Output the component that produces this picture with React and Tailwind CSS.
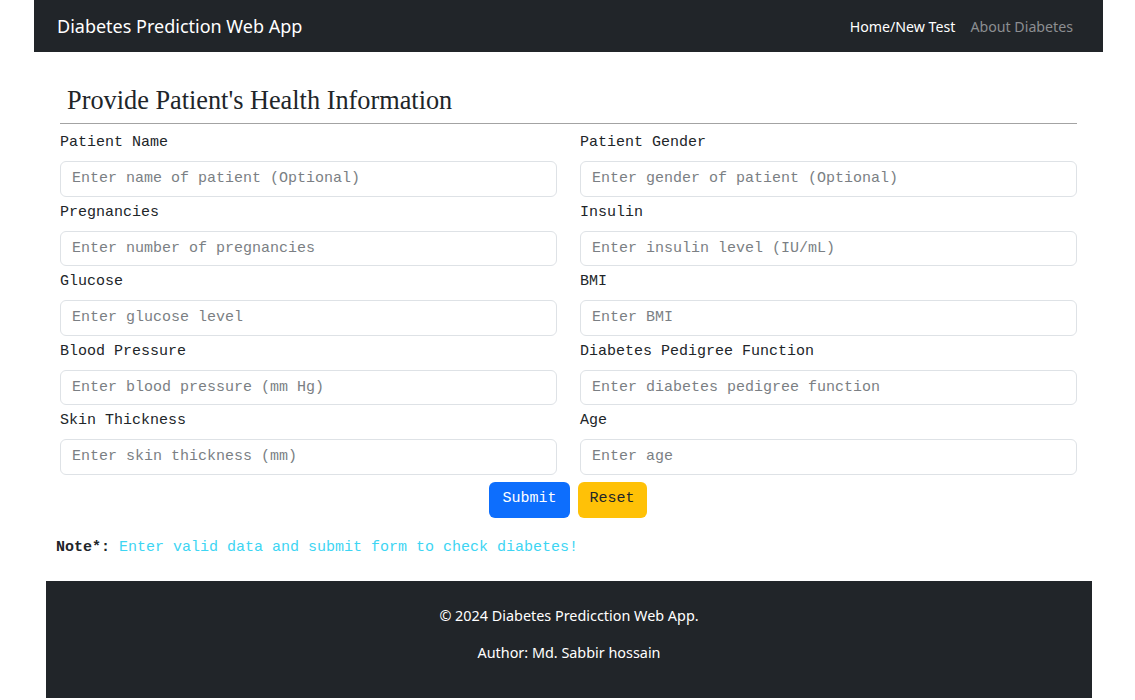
import React from 'react';

const fields = [
  ['Patient Name', 'Enter name of patient (Optional)', 'Patient Gender', 'Enter gender of patient (Optional)'],
  ['Pregnancies', 'Enter number of pregnancies', 'Insulin', 'Enter insulin level (IU/mL)'],
  ['Glucose', 'Enter glucose level', 'BMI', 'Enter BMI'],
  ['Blood Pressure', 'Enter blood pressure (mm Hg)', 'Diabetes Pedigree Function', 'Enter diabetes pedigree function'],
  ['Skin Thickness', 'Enter skin thickness (mm)', 'Age', 'Enter age'],
];

const sans = "font-['Noto_Sans','Open_Sans',sans-serif]";
const mono = "font-['Liberation_Mono','Courier_New',monospace]";

const Field = ({ label, placeholder }) => (
  <div className="flex flex-col">
    <label className={`${mono} text-[15px] leading-[20px] text-[#212529] h-[20px] mt-[5px] mb-[9px] pt-[1px]`}>{label}</label>
    <input
      className={`${mono} h-[35.5px] w-full rounded-[6px] border border-[#dee2e6] px-[11px] text-[15px] placeholder:text-[#7b7f84] outline-none`}
      placeholder={placeholder}
    />
  </div>
);

export default function App() {
  return (
    <div className="min-h-[700px] bg-white">
      {/* navbar */}
      <nav className={`${sans} ml-[34px] mr-[32px] h-[52px] bg-[#212529] flex items-center justify-between pl-[23px] pr-[30px] pt-[1px]`}>
        <span className="text-white text-[18px]">Diabetes Prediction Web App</span>
        <div className="flex gap-[15px] text-[14.2px]">
          <a className="text-white">Home/New Test</a>
          <a className="text-[#8c8e91]">About Diabetes</a>
        </div>
      </nav>

      <div className="ml-[60px] mr-[58px] pt-[32px]">
        <h2 className="font-['Liberation_Serif','Times_New_Roman',serif] text-[26.3px] leading-[34px] text-[#212529] pl-[7px]">
          Provide Patient's Health Information
        </h2>
        <hr className="mt-[5px] border-t border-[#a3a3a3]" />

        <div className="grid grid-cols-2 gap-x-[23px] mt-[3px]">
          {fields.map(([l1, p1, l2, p2]) => (
            <React.Fragment key={l1}>
              <Field label={l1} placeholder={p1} />
              <Field label={l2} placeholder={p2} />
            </React.Fragment>
          ))}
        </div>

        <div className={`${mono} flex justify-center gap-[8px] mt-[7px] text-[15px] pr-[1px]`}>
          <button className="h-[36px] px-[13px] rounded-[6px] bg-[#0d6efd] text-white">Submit</button>
          <button className="h-[36px] px-[12px] rounded-[6px] bg-[#ffc107] text-[#212529]">Reset</button>
        </div>
      </div>

      <p className={`${mono} ml-[56px] mt-[20px] text-[15px] leading-[20px]`}>
        <span className="font-bold text-[#212529]">Note*:</span>{' '}
        <span className="text-[#3dd5f3]">Enter valid data and submit form to check diabetes!</span>
      </p>

      <footer className={`${sans} ml-[46px] mr-[43px] mt-[23px] bg-[#212529] text-white text-[14.4px] text-center pt-[24px] pb-[34px]`}>
        <p className="leading-[22px]">© 2024 Diabetes Predicction Web App.</p>
        <p className="leading-[22px] mt-[15px]">Author: Md. Sabbir hossain</p>
      </footer>
    </div>
  );
}
